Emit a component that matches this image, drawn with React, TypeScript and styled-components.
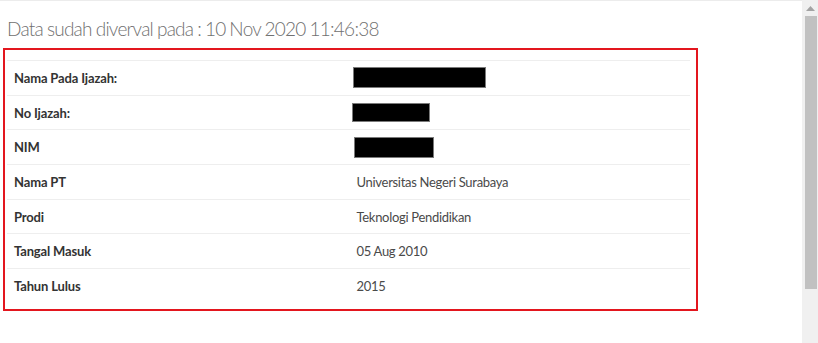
import React from 'react';
import styled, { createGlobalStyle } from 'styled-components';

const GlobalStyle = createGlobalStyle`
  html, body {
    margin: 0;
    padding: 0;
    background: #ffffff;
    overflow: hidden;
  }
`;

type Item = {
    label: string;
    value?: string;
    mask?: { width: number; height: number; offset: number };
};

const items: Item[] = [
    { label: 'Nama Pada Ijazah:', mask: { width: 133, height: 21, offset: 4 } },
    { label: 'No Ijazah:', mask: { width: 78, height: 19, offset: 3 } },
    { label: 'NIM', mask: { width: 80, height: 21, offset: 5 } },
    { label: 'Nama PT', value: 'Universitas Negeri Surabaya' },
    { label: 'Prodi', value: 'Teknologi Pendidikan' },
    { label: 'Tangal Masuk', value: '05 Aug 2010' },
    { label: 'Tahun Lulus', value: '2015' },
];

const App = () => {
    return (
        <>
            <GlobalStyle/>
            <Page>
                <Content>
                    <Heading>Data sudah diverval pada : 10 Nov 2020 11:46:38</Heading>
                    <Box>
                        <Table>
                            {items.map((item) => (
                                <Row key={item.label}>
                                    <Label>{item.label}</Label>
                                    <Value>
                                        {item.mask ? (
                                            <Mask $w={item.mask.width} $h={item.mask.height} $offset={item.mask.offset}/>
                                        ) : item.value}
                                    </Value>
                                </Row>
                            ))}
                        </Table>
                    </Box>
                </Content>
                <ScrollBar>
                    <ArrowButton>
                        <svg width='9' height='5' viewBox='0 0 9 5'>
                            <path d='M4.5 0 L9 5 L0 5 Z' fill='#a3a3a3'/>
                        </svg>
                    </ArrowButton>
                    <Thumb/>
                </ScrollBar>
            </Page>
        </>
    );
};

export default App;

const Page = styled.div`
  display: flex;
  height: 343px;
  width: 818px;
  font-family: 'Lato', 'Open Sans', sans-serif;
`;

const Content = styled.div`
  flex: 1;
  border-top: 1px solid #ececec;
  padding: 16px 0 0 3px;
`;

const Heading = styled.div`
  font-size: 19px;
  font-weight: 300;
  line-height: 24px;
  color: #707070;
  padding-left: 4px;
  letter-spacing: -0.75px;
  word-spacing: -0.5px;
`;

const Box = styled.div`
  width: 695px;
  height: 263px;
  box-sizing: border-box;
  margin-top: 7px;
  border: 2px solid #e3161e;
  padding: 10px 6px 0 2px;
`;

const Table = styled.div`
  display: flex;
  flex-direction: column;
`;

const Row = styled.div`
  display: grid;
  grid-template-columns: 1fr 1fr;
  align-items: center;
  height: 34.7px;
  box-sizing: border-box;
  border-top: 1px solid #eeeeee;
  font-size: 13px;
`;

const Label = styled.div`
  padding: 0 7px;
  font-weight: 700;
  color: #333333;
  letter-spacing: -0.15px;
`;

const Value = styled.div`
  padding: 0 8px;
  color: #4a4a4a;
  letter-spacing: -0.3px;
  display: flex;
  align-items: center;
`;

const Mask = styled.span<{ $w: number; $h: number; $offset: number }>`
  display: block;
  width: ${p => p.$w}px;
  height: ${p => p.$h}px;
  margin-left: ${p => p.$offset - 8}px;
  box-sizing: border-box;
  background: #000000;
  border: 1px solid #7a7a7a;
`;

const ScrollBar = styled.div`
  width: 16px;
  background: #f0f0f0;
  display: flex;
  flex-direction: column;
  align-items: center;
`;

const ArrowButton = styled.div`
  height: 16px;
  width: 100%;
  display: flex;
  align-items: center;
  justify-content: center;
`;

const Thumb = styled.div`
  width: 12px;
  height: 273px;
  margin-left: 2px;
  background: #c1c1c1;
`;
